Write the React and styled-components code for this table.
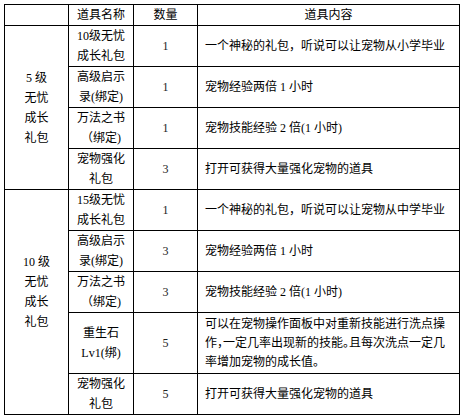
import React from 'react'
import styled, { createGlobalStyle } from 'styled-components'

const GlobalStyle = createGlobalStyle`
  html, body {
    margin: 0;
    padding: 0;
    background: #fff;
  }
`

const Page = styled.div`
  padding: 4px 0 0 4px;
  width: 462px;
  height: 416px;
  box-sizing: border-box;
  background: #fff;
`

const Table = styled.table`
  border-collapse: collapse;
  table-layout: fixed;
  width: 455px;
  font-family: "Liberation Serif", "Noto Sans CJK SC", serif;
  font-size: 12px;
  color: #000;

  td, th {
    border: 1px solid #000;
    padding: 0;
    font-weight: normal;
    line-height: 20px;
    vertical-align: middle;
  }
`

const HeadRow = styled.tr`
  height: 21px;
`

const Row = styled.tr`
  height: ${(p) => (p.$tall ? 61 : 41)}px;
`

const HeadCell = styled.th`
  text-align: center;
`

const GroupCell = styled.td`
  text-align: center;
  padding-bottom: ${(p) => (p.$lift ? 20 : 0)}px !important;
`

const NameCell = styled.td`
  text-align: center;
`

const CountCell = styled.td`
  text-align: center;
  color: #222;
`

const DescCell = styled.td`
  text-align: left;
  padding: 0 0 0 7px !important;
  white-space: nowrap;
  line-height: ${(p) => (p.$tight ? 19 : 20)}px !important;
  font-feature-settings: ${(p) => (p.$tight ? '"halt"' : 'normal')};
`

const groups = [
  {
    label: ['5 级', '无忧', '成长', '礼包'],
    items: [
      { name: ['10级无忧', '成长礼包'], count: 1, desc: ['一个神秘的礼包，听说可以让宠物从小学毕业'] },
      { name: ['高级启示', '录(绑定)'], count: 1, desc: ['宠物经验两倍 1 小时'] },
      { name: ['万法之书', '（绑定)'], count: 1, desc: ['宠物技能经验 2 倍(1 小时)'] },
      { name: ['宠物强化', '礼包'], count: 3, desc: ['打开可获得大量强化宠物的道具'] },
    ],
  },
  {
    label: ['10 级', '无忧', '成长', '礼包'],
    lift: true,
    items: [
      { name: ['15级无忧', '成长礼包'], count: 1, desc: ['一个神秘的礼包，听说可以让宠物从中学毕业'] },
      { name: ['高级启示', '录(绑定)'], count: 3, desc: ['宠物经验两倍 1 小时'] },
      { name: ['万法之书', '（绑定)'], count: 3, desc: ['宠物技能经验 2 倍(1 小时)'] },
      {
        name: ['重生石', 'Lv1(绑)'],
        count: 5,
        tall: true,
        desc: [
          '可以在宠物操作面板中对重新技能进行洗点操',
          '作，一定几率出现新的技能。且每次洗点一定几',
          '率增加宠物的成长值。',
        ],
      },
      { name: ['宠物强化', '礼包'], count: 5, desc: ['打开可获得大量强化宠物的道具'] },
    ],
  },
]

function Lines({ lines }) {
  return lines.map((line, i) => (
    <React.Fragment key={i}>
      {i > 0 && <br />}
      {line}
    </React.Fragment>
  ))
}

export default function App() {
  return (
    <Page>
      <GlobalStyle />
      <Table>
        <colgroup>
          <col style={{ width: 64 }} />
          <col style={{ width: 65 }} />
          <col style={{ width: 64 }} />
          <col style={{ width: 262 }} />
        </colgroup>
        <thead>
          <HeadRow>
            <HeadCell></HeadCell>
            <HeadCell>道具名称</HeadCell>
            <HeadCell>数量</HeadCell>
            <HeadCell>道具内容</HeadCell>
          </HeadRow>
        </thead>
        <tbody>
          {groups.map((g, gi) =>
            g.items.map((item, ii) => (
              <Row key={`${gi}-${ii}`} $tall={item.tall}>
                {ii === 0 && (
                  <GroupCell rowSpan={g.items.length} $lift={g.lift}>
                    <Lines lines={g.label} />
                  </GroupCell>
                )}
                <NameCell>
                  <Lines lines={item.name} />
                </NameCell>
                <CountCell>{item.count}</CountCell>
                <DescCell $tight={item.tall}>
                  <Lines lines={item.desc} />
                </DescCell>
              </Row>
            ))
          )}
        </tbody>
      </Table>
    </Page>
  )
}
